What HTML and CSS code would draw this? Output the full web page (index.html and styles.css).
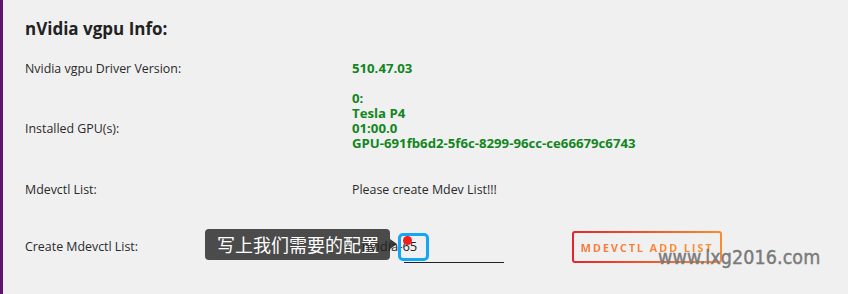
FILE: index.html
```html
<!DOCTYPE html>
<html lang="en">
<head>
<meta charset="utf-8">
<title>nVidia vgpu Info</title>
<link rel="stylesheet" href="styles.css">
</head>
<body>
<div class="page">
  <h2 class="title">nVidia vgpu Info:</h2>
  <div class="rows">
    <div class="row r1">
      <div class="label">Nvidia vgpu Driver Version:</div>
      <div class="value ok">510.47.03</div>
    </div>
    <div class="row r2">
      <div class="label">Installed GPU(s):</div>
      <div class="value ok">0:<br>Tesla P4<br>01:00.0<br>GPU-691fb6d2-5f6c-8299-96cc-ce66679c6743<br>&nbsp;</div>
    </div>
    <div class="row r3">
      <div class="label">Mdevctl List:</div>
      <div class="value plain">Please create Mdev List!!!</div>
    </div>
    <div class="row r4">
      <div class="label">Create Mdevctl List:</div>
      <div class="value controls">
        <div class="field"><span class="field-text">nvidia-65</span></div>
        <button class="add-btn" type="button"><span class="add-btn-text">MDEVCTL ADD LIST</span></button>
      </div>
    </div>
  </div>

  <div class="tip">写上我们需要的配置<span class="tip-arrow"></span></div>
  <div class="focus-ring"></div>
  <div class="dot"></div>
  <div class="watermark">www.lxg2016.com</div>
</div>
</body>
</html>
```
FILE: styles.css
```css
html, body {
  margin: 0;
  padding: 0;
  background: #f0f0f0;
}
body {
  font-family: "Open Sans", "Noto Sans", sans-serif;
  color: #262626;
}
.page {
  position: relative;
  height: 294px;
  box-sizing: border-box;
  border-left: 3px solid #5f136f;
  padding: 19px 0 0 22px;
  overflow: hidden;
}
.title {
  margin: 0 0 22px 0;
  font-size: 17px;
  line-height: 20px;
  font-weight: 700;
  color: #222;
}
.rows {
  display: flex;
  flex-direction: column;
}
.row {
  display: grid;
  grid-template-columns: 327px 1fr;
  align-items: center;
}
.r2 { margin-top: 15px; }
.r3 { margin-top: 16px; }
.r4 { margin-top: 33px; }
.label {
  font-size: 12.4px;
  line-height: 15px;
  color: #2a2a2a;
}
.value {
  font-size: 13.2px;
  line-height: 15px;
}
.ok {
  font-weight: 700;
  color: #12861e;
}
.plain {
  font-size: 12.4px;
  color: #2a2a2a;
}
.controls {
  display: flex;
  align-items: center;
}
.field {
  position: relative;
  z-index: 3;
  margin-left: 52px;
  width: 100px;
  height: 33px;
  box-sizing: border-box;
  border-bottom: 1px solid #222;
  display: flex;
  align-items: center;
  padding-top: 1px;
}
.field-text {
  margin-left: -42px;
  font-size: 13px;
  color: #222;
  white-space: nowrap;
}
.add-btn {
  margin-left: 68px;
  width: 150px;
  height: 32px;
  box-sizing: border-box;
  padding: 0;
  border: 2px solid transparent;
  border-radius: 3px;
  background:
    linear-gradient(#f0f0f0, #f0f0f0) padding-box,
    linear-gradient(90deg, #e3242b, #fd8a2e) border-box;
  cursor: pointer;
  font-family: "Open Sans", sans-serif;
}
.add-btn-text {
  font-size: 11px;
  font-weight: 700;
  letter-spacing: 1.85px;
  background: linear-gradient(90deg, #f7763a, #fd8e32);
  -webkit-background-clip: text;
  background-clip: text;
  color: transparent;
}
.tip {
  position: absolute;
  left: 202px;
  top: 229px;
  width: 185px;
  height: 31px;
  box-sizing: border-box;
  padding-left: 12px;
  background: #4b4b4b;
  border-radius: 4px;
  color: #fff;
  font-family: "Noto Sans CJK SC", "Noto Sans", sans-serif;
  font-size: 18px;
  line-height: 31px;
  z-index: 2;
}
.tip-arrow {
  position: absolute;
  right: -7px;
  top: 10px;
  width: 0;
  height: 0;
  border-top: 5px solid transparent;
  border-bottom: 5px solid transparent;
  border-left: 7px solid #3a3a3a;
}
.focus-ring {
  position: absolute;
  left: 395px;
  top: 233px;
  width: 31px;
  height: 28px;
  box-sizing: border-box;
  border: 3px solid #12a6f4;
  border-radius: 5px;
  z-index: 4;
}
.dot {
  position: absolute;
  left: 400px;
  top: 236px;
  width: 9px;
  height: 9px;
  border-radius: 50%;
  background: #f41c1c;
  z-index: 5;
}
.watermark {
  position: absolute;
  left: 655px;
  top: 246px;
  font-family: "DejaVu Sans Condensed", "DejaVu Sans", sans-serif;
  font-size: 19.5px;
  font-weight: 400;
  line-height: 24px;
  letter-spacing: 0.1px;
  color: #7a7a7a;
  -webkit-text-stroke: 0.4px #7a7a7a;
  z-index: 6;
}
```
